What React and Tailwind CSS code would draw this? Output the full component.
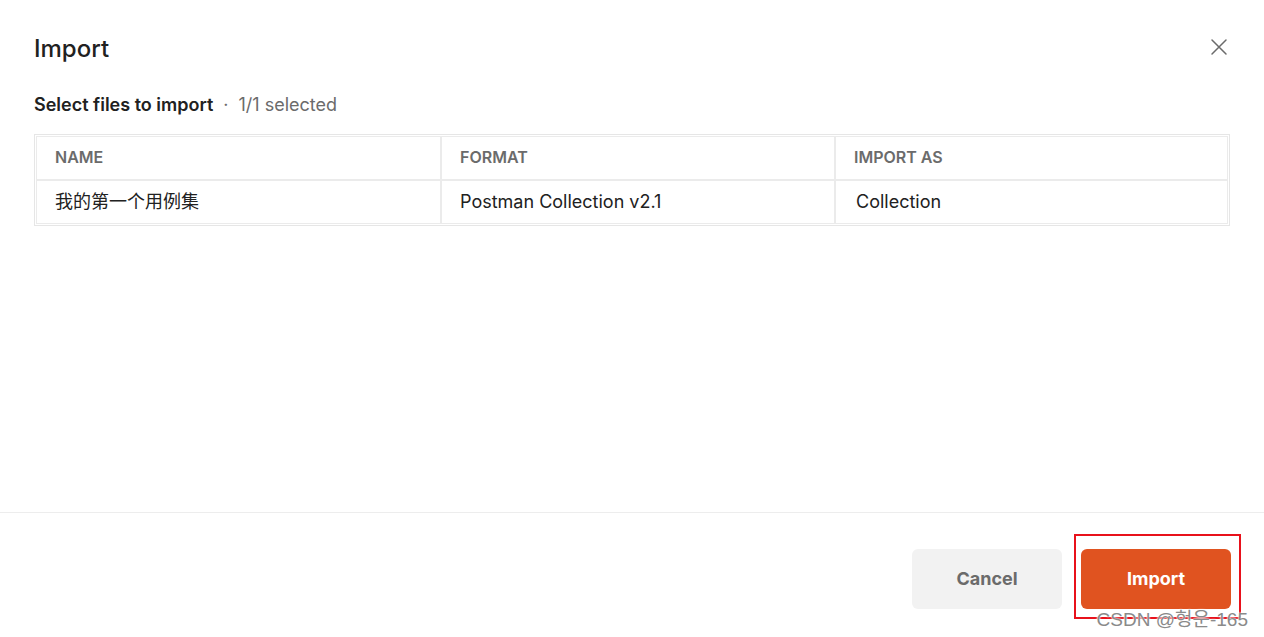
import React from 'react';

const rows = [
    { name: '我的第一个用例集', format: 'Postman Collection v2.1', importAs: 'Collection' },
];

const CloseIcon = () => (
    <svg width="18" height="18" viewBox="0 0 18 18" fill="none" stroke="#6b6b6b" strokeWidth="1.5" strokeLinecap="round">
        <path d="M2 2L16 16M16 2L2 16" />
    </svg>
);

const App = () => {
    return (
        <div className="h-[637px] w-full bg-white flex flex-col font-['Inter','Noto_Sans_CJK_SC',sans-serif] text-[#212121]">
            {/* header + body */}
            <div className="flex-1 px-[34px] pt-[34px]">
                <div className="flex items-center justify-between">
                    <h1 className="text-[24px] leading-[30px] font-medium">Import</h1>
                    <button className="mr-[2px] -mt-[4px]">
                        <CloseIcon />
                    </button>
                </div>

                <div className="mt-[29px] flex items-center text-[18px] leading-[24px]">
                    <span className="font-semibold">Select files to import</span>
                    <span className="mx-[10px] text-[#6b6b6b]">·</span>
                    <span className="text-[#6b6b6b]">1/1 selected</span>
                </div>

                <div className="mt-[17px] border border-[#e6e6e6] p-px">
                    <div className="grid grid-cols-[405px_394px_1fr] text-[16px] font-semibold text-[#6b6b6b]">
                        <div className="h-[44px] flex items-center pl-[18px] pb-[2px] border border-[#ebebeb]">NAME</div>
                        <div className="h-[44px] flex items-center pl-[18px] pb-[2px] border border-[#ebebeb]">FORMAT</div>
                        <div className="h-[44px] flex items-center pl-[18px] pb-[2px] border border-[#ebebeb]">IMPORT AS</div>
                    </div>
                    {rows.map((r) => (
                        <div key={r.name} className="grid grid-cols-[405px_394px_1fr] text-[18px] text-[#212121]">
                            <div className="h-[44px] flex items-center pl-[18px] pb-[2px] border border-[#ebebeb]">{r.name}</div>
                            <div className="h-[44px] flex items-center pl-[18px] pb-[2px] border border-[#ebebeb]">{r.format}</div>
                            <div className="h-[44px] flex items-center pl-[20px] pb-[2px] border border-[#ebebeb]">{r.importAs}</div>
                        </div>
                    ))}
                </div>
            </div>

            {/* footer */}
            <div className="border-t border-[#ededed] h-[125px] pt-[36px] pr-[33px] flex justify-end gap-[19px] relative">
                <button className="w-[150px] h-[60px] pb-[2px] rounded-[6px] bg-[#f2f2f2] text-[18px] font-bold text-[#6b6b6b]">
                    Cancel
                </button>
                <div className="relative">
                    <button className="w-[150px] h-[60px] pb-[2px] rounded-[6px] bg-[#e05320] text-[18px] font-bold text-white">
                        Import
                    </button>
                    <div className="absolute -left-[7px] -top-[15px] w-[167px] h-[85px] border-2 border-[#e8111b] pointer-events-none"></div>
                </div>
                <div className="absolute right-[16px] bottom-[6px] text-[19px] leading-[22px] text-[#8a8a8a] font-['Liberation_Sans','Noto_Sans_CJK_KR',sans-serif] [text-shadow:0_0_2px_#fff,0_0_2px_#fff]">
                    CSDN @헝운-165
                </div>
            </div>
        </div>
    );
};

export default App;
